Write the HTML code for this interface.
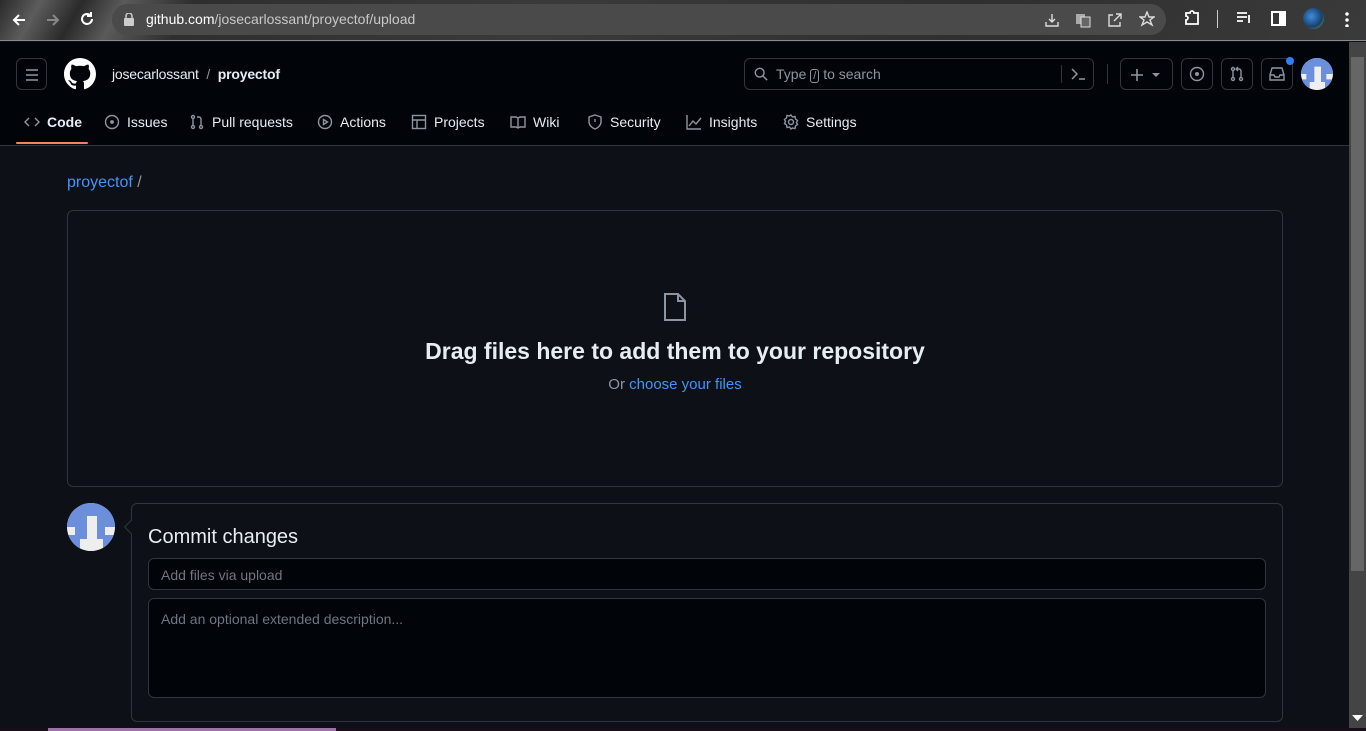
<!DOCTYPE html>
<html><head><meta charset="utf-8"><style>
*{box-sizing:border-box;margin:0;padding:0}
body{width:1366px;height:731px;overflow:hidden;background:#0d1117;font-family:"Liberation Sans",sans-serif;color:#e6edf3;position:relative}
.chrome{position:absolute;left:0;top:0;width:1366px;height:41px;background:linear-gradient(120deg,#2a2a2a 0,#5c5c5c 3%,#2a2a2a 6%,#5a5a5a 9%,#2e2e2e 14%,#3a3a3a 40%,#2f2f2f 70%,#3a3a3a 100%);border-bottom:1px solid #8a8a8a}
.url{position:absolute;left:112px;top:4px;width:1054px;height:31px;border-radius:16px;background:#4a4a4a;color:#e8e8e8;font-size:14px;line-height:31px;padding-left:34px}
.url b{font-weight:normal;color:#fff}
.url span{color:#c8c8c8}
.hdr{position:absolute;left:0;top:42px;width:1349px;height:104px;background:#010409;border-bottom:1px solid #30363d}
.btn{position:absolute;border:1px solid #30363d;border-radius:6px}
.nav{position:absolute;top:114px;font-size:14px;color:#e6edf3;display:flex;align-items:center;gap:7px}
.nav svg{stroke:#8d96a0;fill:none;stroke-width:1.4}
.sb{position:absolute;left:1349px;top:42px;width:17px;height:686px;background:#444}
.thumb{position:absolute;left:1351px;top:57px;width:13px;height:514px;background:#666}
.box{position:absolute;border:1px solid #30363d;border-radius:6px}
</style></head><body>
<div class="chrome">
<svg style="position:absolute;left:10px;top:11px" width="18" height="18" viewBox="0 0 18 18"><path d="M15 9H4M9 4L4 9l5 5" stroke="#fff" stroke-width="2" fill="none"/></svg>
<svg style="position:absolute;left:44px;top:11px" width="18" height="18" viewBox="0 0 18 18"><path d="M3 9h11M9 4l5 5-5 5" stroke="#888" stroke-width="2" fill="none"/></svg>
<svg style="position:absolute;left:78px;top:10px" width="18" height="18" viewBox="0 0 18 18"><path d="M14 9a5 5 0 1 1-2-4M13 2v4H9" stroke="#fff" stroke-width="2" fill="none"/></svg>
<div class="url"><svg style="position:absolute;left:12px;top:9px" width="10" height="13" viewBox="0 0 10 13"><rect x="0" y="5" width="10" height="8" rx="1" fill="#ccc"/><path d="M2 5V3a3 3 0 0 1 6 0v2" stroke="#ccc" stroke-width="1.5" fill="none"/></svg><b>github.com</b><span>/josecarlossant/proyectof/upload</span>
<svg style="position:absolute;left:932px;top:8px" width="16" height="16" viewBox="0 0 16 16" stroke="#ddd" fill="none" stroke-width="1.4"><path d="M8 2v8M5 7l3 3 3-3M2 10v4h12v-4"/></svg>
<svg style="position:absolute;left:963px;top:8px" width="16" height="16" viewBox="0 0 16 16"><rect x="1" y="2" width="9" height="10" fill="#aaa"/><rect x="6" y="5" width="9" height="10" fill="#666" stroke="#ddd"/></svg>
<svg style="position:absolute;left:995px;top:8px" width="16" height="16" viewBox="0 0 16 16" stroke="#ddd" fill="none" stroke-width="1.4"><path d="M6 3H2v11h11v-4M9 2h5v5M14 2L7 9"/></svg>
<svg style="position:absolute;left:1027px;top:7px" width="16" height="16" viewBox="0 0 16 16" stroke="#ddd" fill="none" stroke-width="1.4"><path d="M8 1l2 5h5l-4 3 2 5-5-3-5 3 2-5-4-3h5z"/></svg>
</div>
<svg style="position:absolute;left:1183px;top:9px" width="18" height="18" viewBox="0 0 18 18" stroke="#fff" fill="none" stroke-width="1.8"><path d="M3 4h4a2 2 0 0 1 4 0h4v11H3v-4a2 2 0 0 0 0-4z"/></svg>
<div style="position:absolute;left:1217px;top:10px;width:1px;height:18px;background:#ccc"></div>
<svg style="position:absolute;left:1236px;top:11px" width="16" height="14" viewBox="0 0 16 14" stroke="#fff" stroke-width="1.8"><path d="M1 2h10M1 6h10M1 10h6M13 4v8"/></svg>
<svg style="position:absolute;left:1271px;top:11px" width="15" height="15" viewBox="0 0 15 15"><rect x="1" y="1" width="13" height="13" fill="none" stroke="#fff" stroke-width="2"/><rect x="8" y="1" width="6" height="13" fill="#fff"/></svg>
<div style="position:absolute;left:1303px;top:8px;width:21px;height:21px;border-radius:50%;background:radial-gradient(circle at 40% 40%,#3c8ee0,#1a3f6a 60%,#7ac25a)"></div>
<div style="position:absolute;left:1345px;top:11px;width:4px;height:16px;background:radial-gradient(circle,#fff 1.5px,transparent 2px) 0 0/4px 6px"></div>

<div class="hdr">
<div class="btn" style="left:16px;top:16px;width:31px;height:32px"><svg style="position:absolute;left:7px;top:8px" width="16" height="16" viewBox="0 0 16 16" stroke="#8d96a0" stroke-width="1.5"><path d="M2 3h12M2 8h12M2 13h12"/></svg></div>
<svg style="position:absolute;left:64px;top:16px" width="32" height="32" viewBox="0 0 16 16"><path fill="#fff" d="M8 0C3.58 0 0 3.58 0 8c0 3.54 2.290 6.530 5.470 7.590.4.07.55-.17.55-.38 0-.19-.01-.82-.01-1.490-2.010.37-2.530-.49-2.690-.94-.09-.23-.48-.94-.82-1.130-.28-.15-.68-.52-.01-.53.63-.01 1.080.58 1.230.82.72 1.210 1.870.87 2.330.66.07-.52.28-.87.51-1.070-1.780-.2-3.640-.89-3.640-3.950 0-.87.31-1.590.82-2.150-.08-.2-.36-1.020.08-2.120 0 0 .67-.21 2.200.82.64-.18 1.320-.27 2-.27.68 0 1.360.09 2 .27 1.530-1.040 2.200-.82 2.200-.82.44 1.100.16 1.920.08 2.120.51.56.82 1.270.82 2.150 0 3.070-1.870 3.750-3.650 3.950.29.25.54.73.54 1.480 0 1.070-.01 1.930-.01 2.200 0 .21.15.46.55.38A8.013 8.013 0 0016 8c0-4.420-3.580-8-8-8z"/></svg>
<div style="position:absolute;left:112px;top:24px;font-size:14px;color:#e6edf3;letter-spacing:-0.2px">josecarlossant <span style="color:#8d96a0;margin:0 4px">/</span> <b>proyectof</b></div>
<div class="btn" style="left:744px;top:16px;width:350px;height:32px;font-size:14px;color:#8d96a0;line-height:30px;padding-left:31px">
<svg style="position:absolute;left:9px;top:8px" width="14" height="14" viewBox="0 0 16 16" stroke="#8d96a0" fill="none" stroke-width="1.6"><circle cx="6.5" cy="6.5" r="5"/><path d="M10 10l5 5"/></svg>
Type <span style="border:1px solid #8d96a0;border-radius:3px;padding:0 2px;font-size:11px">/</span> to search
<div style="position:absolute;left:316px;top:6px;width:1px;height:18px;background:#30363d"></div>
<svg style="position:absolute;left:325px;top:8px" width="16" height="14" viewBox="0 0 16 14" stroke="#8d96a0" fill="none" stroke-width="1.5"><path d="M2 2l5 5-5 5M9 12h6"/></svg></div>
<div style="position:absolute;left:1107px;top:22px;width:1px;height:20px;background:#30363d"></div>
<div class="btn" style="left:1120px;top:16px;width:53px;height:32px"><svg style="position:absolute;left:8px;top:8px" width="34" height="16" viewBox="0 0 34 16" stroke="#8d96a0" stroke-width="1.6"><path d="M8 2v12M2 8h12"/><path d="M23 6h8l-4 4z" fill="#8d96a0" stroke="none"/></svg></div>
<div class="btn" style="left:1181px;top:16px;width:32px;height:32px"><svg style="position:absolute;left:7px;top:7px" width="16" height="16" viewBox="0 0 16 16" stroke="#8d96a0" fill="none" stroke-width="1.4"><circle cx="8" cy="8" r="6.5"/><circle cx="8" cy="8" r="1.3" fill="#8d96a0"/></svg></div>
<div class="btn" style="left:1221px;top:16px;width:32px;height:32px"><svg style="position:absolute;left:7px;top:7px" width="16" height="16" viewBox="0 0 16 16" stroke="#8d96a0" fill="none" stroke-width="1.4"><circle cx="4" cy="3" r="1.5"/><circle cx="4" cy="13" r="1.5"/><circle cx="12" cy="13" r="1.5"/><path d="M4 5v6M12 11V5a2 2 0 0 0-2-2H8M9 1L7 3l2 2"/></svg></div>
<div class="btn" style="left:1261px;top:16px;width:32px;height:32px"><svg style="position:absolute;left:7px;top:7px" width="16" height="16" viewBox="0 0 16 16" stroke="#8d96a0" fill="none" stroke-width="1.4"><path d="M1 9l2-7h10l2 7v5H1zM1 9h4l1 2h4l1-2h4"/></svg></div>
<div style="position:absolute;left:1286px;top:15px;width:8px;height:8px;border-radius:50%;background:#2f81f7"></div>
<svg style="position:absolute;left:1301px;top:16px" width="32" height="32" viewBox="0 0 48 48"><defs><clipPath id="c1"><circle cx="24" cy="24" r="24"/></clipPath></defs><g clip-path="url(#c1)"><rect width="48" height="48" fill="#eeeeee"/><path fill="#6b8fdb" d="M0 0h48v24h-10v8h10v16H0V32h8v-8H0z"/><path fill="#eeeeee" d="M20 13h10v23h6v12H13V36h7z"/></g></svg>
<div style="position:absolute;left:16px;top:100px;width:72px;height:2px;background:#f78166;border-radius:2px"></div>
</div>
<div class="nav" style="left:24px"><svg width="16" height="16" viewBox="0 0 16 16"><path d="M5 4L1 8l4 4M11 4l4 4-4 4"/></svg><b>Code</b></div>
<div class="nav" style="left:104px"><svg width="16" height="16" viewBox="0 0 16 16"><circle cx="8" cy="8" r="6.5"/><circle cx="8" cy="8" r="1.2" fill="#8d96a0"/></svg>Issues</div>
<div class="nav" style="left:189px"><svg width="16" height="16" viewBox="0 0 16 16"><circle cx="4" cy="3" r="1.5"/><circle cx="4" cy="13" r="1.5"/><circle cx="12" cy="13" r="1.5"/><path d="M4 5v6M12 11V5a2 2 0 0 0-2-2H8"/></svg>Pull requests</div>
<div class="nav" style="left:317px"><svg width="16" height="16" viewBox="0 0 16 16"><circle cx="8" cy="8" r="6.5"/><path d="M6.5 5.5l4 2.5-4 2.5z"/></svg>Actions</div>
<div class="nav" style="left:411px"><svg width="16" height="16" viewBox="0 0 16 16"><rect x="1.5" y="1.5" width="13" height="13"/><path d="M1.5 6h13M6 6v8.5"/></svg>Projects</div>
<div class="nav" style="left:510px"><svg width="16" height="16" viewBox="0 0 16 16"><path d="M1 3h5l2 1 2-1h5v10h-5l-2 1-2-1H1zM8 4v10"/></svg>Wiki</div>
<div class="nav" style="left:587px"><svg width="16" height="16" viewBox="0 0 16 16"><path d="M8 1l6 2v5c0 3-3 6-6 7-3-1-6-4-6-7V3z"/><path d="M8 5v3"/></svg>Security</div>
<div class="nav" style="left:686px"><svg width="16" height="16" viewBox="0 0 16 16"><path d="M1 1v14h14M3 12l4-5 3 3 5-6"/></svg>Insights</div>
<div class="nav" style="left:783px"><svg width="16" height="16" viewBox="0 0 16 16"><circle cx="8" cy="8" r="2.5"/><path d="M8 1l1.5 2 2.5-.5.5 2.5 2 1.5-1 2 1 2-2 1.5-.5 2.5-2.5-.5L8 15l-1.5-2-2.5.5-.5-2.5-2-1.5 1-2-1-2 2-1.5.5-2.5 2.5.5z"/></svg>Settings</div>

<div style="position:absolute;left:67px;top:174px;font-size:16px;color:#4493f8">proyectof <span style="color:#8d96a0">/</span></div>
<div class="box" style="left:67px;top:210px;width:1216px;height:277px"></div>
<svg style="position:absolute;left:663px;top:292px" width="24" height="30" viewBox="0 0 24 30" stroke="#8d96a0" fill="none" stroke-width="2"><path d="M2 2h13l7 7v19H2zM15 2v7h7"/></svg>
<div style="position:absolute;left:0;width:1350px;top:338px;text-align:center;font-size:23px;font-weight:bold">Drag files here to add them to your repository</div>
<div style="position:absolute;left:0;width:1350px;top:376px;text-align:center;font-size:15px;color:#8d96a0">Or <span style="color:#4493f8">choose your files</span></div>

<svg style="position:absolute;left:67px;top:503px" width="48" height="48" viewBox="0 0 48 48"><defs><clipPath id="c2"><circle cx="24" cy="24" r="24"/></clipPath></defs><g clip-path="url(#c2)"><rect width="48" height="48" fill="#eeeeee"/><path fill="#6b8fdb" d="M0 0h48v24h-10v8h10v16H0V32h8v-8H0z"/><path fill="#eeeeee" d="M20 13h10v23h6v12H13V36h7z"/></g></svg>
<div class="box" style="left:131px;top:503px;width:1152px;height:219px"></div>
<div style="position:absolute;left:126px;top:522px;width:10px;height:10px;background:#0d1117;border-left:1px solid #30363d;border-bottom:1px solid #30363d;transform:rotate(45deg)"></div>
<div style="position:absolute;left:148px;top:526px;font-size:20px">Commit changes</div>
<div class="box" style="left:148px;top:558px;width:1118px;height:32px;background:#010409;font-size:14px;color:#6e7681;padding:8px 12px">Add files via upload</div>
<div class="box" style="left:148px;top:598px;width:1118px;height:100px;background:#010409;font-size:14px;color:#6e7681;padding:12px 12px">Add an optional extended description...</div>
<div class="sb"></div><div class="thumb"></div>
<svg style="position:absolute;left:1352px;top:714px" width="11" height="8" viewBox="0 0 11 8"><path d="M0 1h11L5.5 7z" fill="#fff"/></svg>
<div style="position:absolute;left:0;top:728px;width:1366px;height:3px;background:#1a0d1a"></div>
<div style="position:absolute;left:48px;top:728px;width:288px;height:3px;background:#a070a8"></div>
</body></html>
